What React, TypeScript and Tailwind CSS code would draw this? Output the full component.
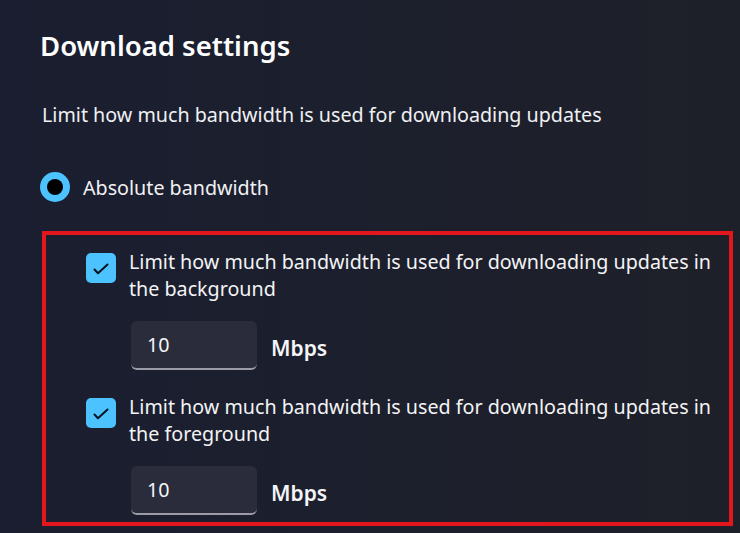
import React from "react";

const FONT = { fontFamily: '"Noto Sans", "Open Sans", sans-serif' };

function CheckBox() {
  return (
    <span className="flex h-[30px] w-[30px] shrink-0 items-center justify-center rounded-[5px] bg-[#4cc2ff]">
      <svg width="30" height="30" viewBox="0 0 30 30" fill="none" aria-hidden="true">
        <path d="M8.5 16.5 L12 20.2 L21.5 11.5" stroke="#08141c" strokeWidth="2" strokeLinecap="round" strokeLinejoin="round" />
      </svg>
    </span>
  );
}

function LimitRow({ where, value }: { where: string; value: string }) {
  return (
    <div className="flex gap-[13px]">
      <CheckBox />
      <div className="flex flex-col">
        <p className="-mt-[5px] text-[19.7px] leading-[27px] text-[#f3f3f5]">
          Limit how much bandwidth is used for downloading updates in
          <br />
          {where}
        </p>
        <div className="ml-[2px] mt-[19px] flex items-center gap-[14px]">
          <div className="flex h-[49px] w-[126px] items-center rounded-[6px] border-b-2 border-[#9b9ca8] bg-[#2a2c3c] px-[16px] text-[19.7px] text-[#f5f5f7]">
            {value}
          </div>
          <span className="mt-[6px] text-[21px] font-semibold text-[#f5f5f7]">Mbps</span>
        </div>
      </div>
    </div>
  );
}

export default function App() {
  return (
    <div
      className="h-[533px] w-[740px] overflow-hidden bg-gradient-to-r from-[#1a1e30] to-[#1e2029] pl-[40px] pt-[28px]"
      style={FONT}
    >
      <h1 className="text-[27.5px] font-semibold leading-[36px] text-white">Download settings</h1>
      <p className="ml-[2px] mt-[37px] text-[19.7px] leading-[27px] text-[#f0f0f3]">
        Limit how much bandwidth is used for downloading updates
      </p>
      <div className="mt-[44px] flex items-center gap-[13px]">
        <span className="flex h-[30px] w-[30px] items-center justify-center rounded-full bg-[#4cc2ff]">
          <span className="h-[16px] w-[16px] rounded-full bg-black" />
        </span>
        <span className="text-[19.7px] leading-[27px] text-[#f0f0f3]">Absolute bandwidth</span>
      </div>
      <div className="ml-[2px] mt-[29px] flex h-[295px] w-[691px] flex-col gap-[28px] border-[4px] border-[#e3161e] pl-[40px] pt-[18px]">
        <LimitRow where="the background" value="10" />
        <LimitRow where="the foreground" value="10" />
      </div>
    </div>
  );
}
